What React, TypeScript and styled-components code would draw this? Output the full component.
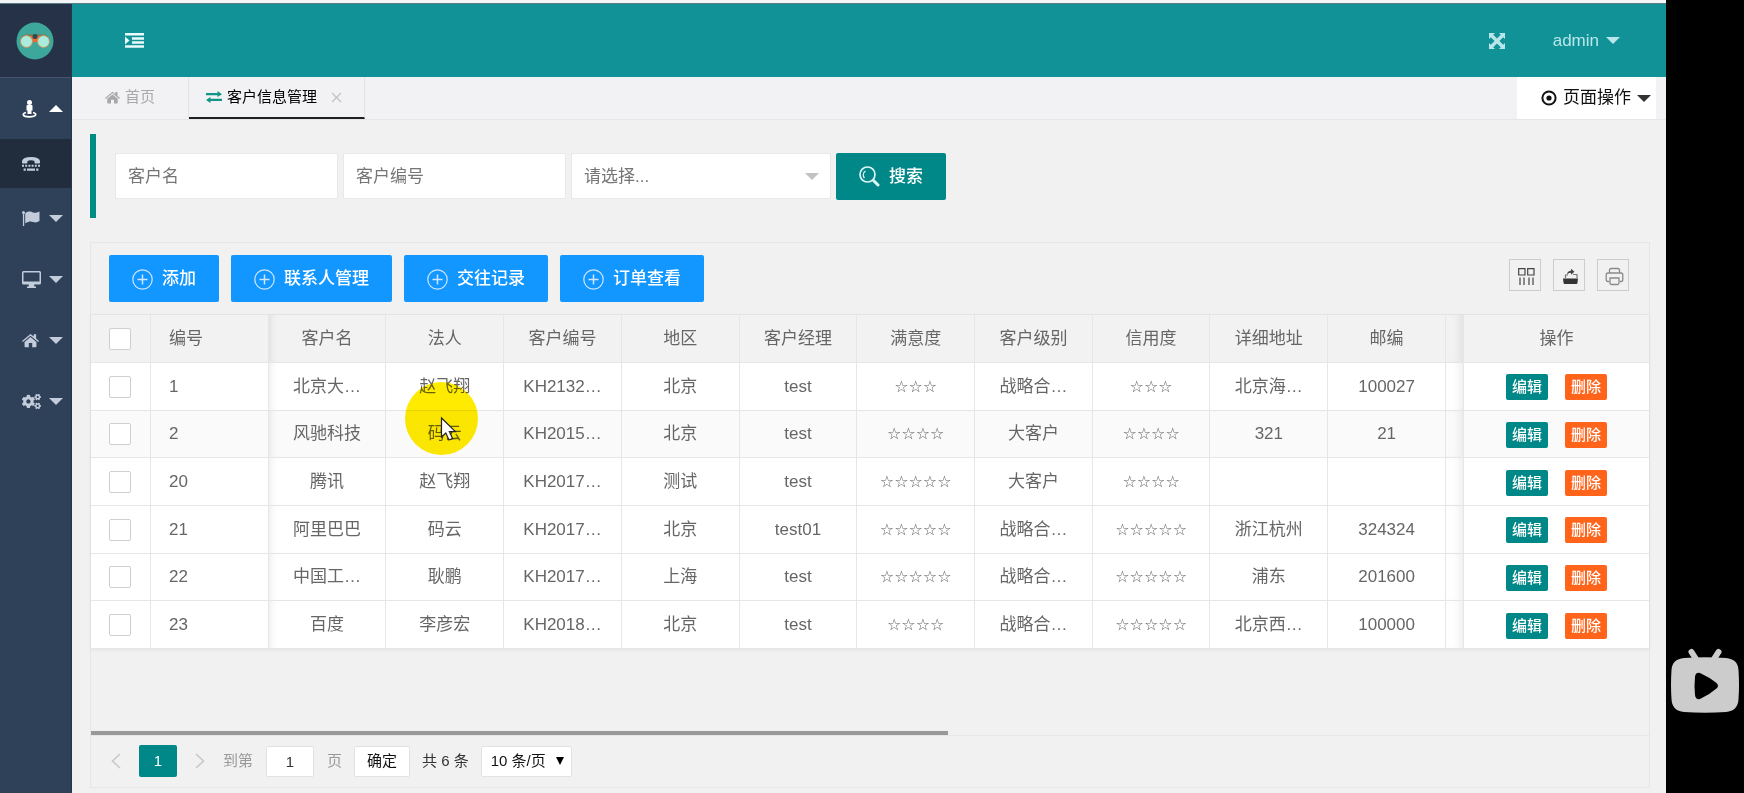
import React from 'react';
import styled, { createGlobalStyle, css } from 'styled-components';
import { FaCogs } from 'react-icons/fa';

const GlobalStyle = createGlobalStyle`
  *, *::before, *::after { box-sizing: border-box; }
  body {
    margin: 0;
    background: #000;
    color: #666;
    font: 17px/24px "Liberation Sans", "Noto Sans CJK SC", sans-serif;
  }
  button, input, select { font: inherit; color: inherit; margin: 0; }
  button { cursor: pointer; }
  a { color: inherit; text-decoration: none; }
  svg { display: block; flex: none; }
`;

const Screen = styled.div`
  display: flex;
  min-height: 100vh;
`;

const Page = styled.div`
  flex: 1;
  min-width: 0;
  display: flex;
  flex-direction: column;
  background: #f1f1f1;
  border-top: 3px solid #f4f5f7;
`;

const Shell = styled.div`
  flex: 1;
  display: flex;
  border-top: 1px solid #5b7f88;
`;

const PlayerRail = styled.aside`
  width: 78px;
  flex: none;
  display: flex;
  flex-direction: column;
  justify-content: flex-end;
  align-items: center;
  padding-bottom: 80px;
`;

const PlayerButton = styled.button`
  border: 0;
  padding: 0;
  background: none;
`;

const Sidebar = styled.nav`
  width: 72px;
  flex: none;
  background: #2f4059;
  border-right: 1px solid #28354a;
`;

const Logo = styled.a`
  display: flex;
  height: 74px;
  padding-right: 2px;
  align-items: center;
  justify-content: center;
  background: #263248;
  border-bottom: 1px solid #46536a;
`;

const NavItem = styled.a<{ $height: number; $tone?: 'open' | 'current' }>`
  display: flex;
  align-items: center;
  height: ${(p) => p.$height}px;
  padding: 0 8px 0 22px;
  justify-content: space-between;
  color: ${(p) => (p.$tone === 'open' ? '#fff' : '#c3ccdb')};
  background: ${(p) => (p.$tone === 'current' ? '#212c3c' : 'transparent')};
`;

const Caret = styled.span<{ $up?: boolean; $color?: string }>`
  flex: none;
  border: 7px solid transparent;
  ${(p) =>
    p.$up
      ? css`
          border-top-width: 0;
          border-bottom-color: currentColor;
        `
      : css`
          border-bottom-width: 0;
          border-top-color: currentColor;
        `}
  ${(p) => p.$color && css`color: ${p.$color};`}
`;

const Main = styled.div`
  flex: 1;
  min-width: 0;
  display: flex;
  flex-direction: column;
`;

const Header = styled.header`
  height: 73px;
  display: flex;
  align-items: center;
  justify-content: space-between;
  padding: 0 46px 0 53px;
  background: #119296;
  color: #b9e6ea;
`;

const HeaderGroup = styled.div`
  display: flex;
  align-items: center;
  gap: 48px;
`;

const HeaderButton = styled.button`
  display: flex;
  align-items: center;
  gap: 7px;
  border: 0;
  padding: 0;
  background: none;
`;

const TabBar = styled.div`
  height: 43px;
  display: flex;
  background: #f2f2f4;
  border-bottom: 1px solid #e6e6e8;
  padding-right: 10px;
`;

const Tab = styled.a<{ $active?: boolean }>`
  display: flex;
  align-items: center;
  gap: 5px;
  height: 42px;
  padding: 0 ${(p) => (p.$active ? 22 : 33)}px 0 ${(p) => (p.$active ? 17 : 33)}px;
  border-right: 1px solid #e4e4e6;
  border-bottom: 2px solid ${(p) => (p.$active ? '#1c2020' : 'transparent')};
  font-size: 15px;
  color: ${(p) => (p.$active ? '#000' : '#a8a8a8')};
`;

const CloseButton = styled.button`
  border: 0;
  padding: 0 0 0 9px;
  background: none;
  color: #c4c4c4;
`;

const PageMenu = styled.button`
  display: flex;
  align-items: center;
  gap: 6px;
  margin-left: auto;
  border: 0;
  padding: 0 5px 0 24px;
  background: #fff;
  color: #111;
`;

const Content = styled.main`
  flex: 1;
  padding: 14px 16px 6px 18px;
`;

const SearchBar = styled.form`
  display: flex;
  align-items: center;
  gap: 5px;
  height: 84px;
  margin-bottom: 24px;
  padding-left: 19px;
  border-left: 6px solid #008c84;
`;

const fieldBox = css`
  height: 46px;
  border: 1px solid #e8e8ea;
  border-radius: 2px;
  background: #fff;
  color: #757575;
`;

const TextField = styled.input`
  ${fieldBox}
  width: 223px;
  padding: 2px 12px 0;
  &::placeholder { color: #757575; opacity: 1; }
`;

const SelectField = styled.div`
  display: flex;
  align-items: center;
  width: 260px;
  ${fieldBox}
  padding-right: 11px;
  select {
    flex: 1;
    height: 44px;
    padding: 2px 0 0 12px;
    border: 0;
    background: none;
    appearance: none;
  }
`;

const ActionButton = styled.button<{ $color: string }>`
  display: flex;
  align-items: center;
  gap: 9px;
  height: 47px;
  padding: 1px 23px 0;
  border: 0;
  border-radius: 2px;
  background: ${(p) => p.$color};
  color: #fff;
  font-weight: 500;
  white-space: nowrap;
`;

const Panel = styled.section`
  display: flex;
  flex-direction: column;
  border: 1px solid #e6e6e6;
`;

const Toolbar = styled.div`
  display: flex;
  align-items: flex-start;
  gap: 12px;
  height: 72px;
  padding: 12px 20px 0 18px;
  border-bottom: 1px solid #e6e6e6;
`;

const ToolIcons = styled.div`
  display: flex;
  gap: 12px;
  margin: 4px 0 0 auto;
`;

const ToolButton = styled.button`
  display: flex;
  align-items: center;
  justify-content: center;
  width: 32px;
  height: 32px;
  border: 1px solid #ccc;
  padding: 2px 0 0 2px;
  background: none;
  color: #333;
`;

const TableArea = styled.div`
  height: 416px;
`;

const Table = styled.table`
  width: 100%;
  height: 334px;
  table-layout: fixed;
  border-collapse: separate;
  border-spacing: 0;
  background: #fff;
  box-shadow: 0 1px 4px rgba(0, 0, 0, 0.06);

  th, td {
    padding: 1px 17px 0;
    border: solid #e6e6e6;
    border-width: 0 1px 1px 0;
    font-weight: 400;
    text-align: center;
    white-space: nowrap;
    overflow: hidden;
  }
  th { height: 48px; background: #f2f2f2; }
  th:nth-child(2), td:nth-child(2) { padding-left: 18px; text-align: left; }
  th:nth-child(3), td:nth-child(3) {
    box-shadow: inset 7px 0 7px -5px rgba(0, 0, 0, 0.08);
  }
  th:nth-child(13), td:nth-child(13) {
    padding: 0;
    box-shadow: inset -8px 0 8px -5px rgba(0, 0, 0, 0.08);
  }
  th:last-child, td:last-child { border-right: 0; padding: 1px 0 0; }
`;

const Row = styled.tr<{ $hover?: boolean }>`
  background: ${(p) => (p.$hover ? '#fafafa' : '#fff')};
`;

const Check = styled.input`
  display: block;
  appearance: none;
  width: 22px;
  height: 22px;
  && { margin: 0 0 0 1px; }
  border: 1px solid #cfcfcf;
  border-radius: 2px;
  background: #fff;
`;

const Stars = styled.span`
  font-family: "DejaVu Sans", sans-serif;
  font-size: 16px;
`;

const RowActions = styled.div`
  display: flex;
  justify-content: center;
  gap: 17px;
  padding-top: 1px;
`;

const SmallButton = styled.button<{ $color: string }>`
  width: 42px;
  height: 26px;
  border: 0;
  border-radius: 2px;
  padding: 0;
  background: ${(p) => p.$color};
  color: #fff;
  font-size: 15px;
  font-weight: 500;
`;

const ScrollTrack = styled.div`
  height: 5px;
  border-bottom: 1px solid #e6e6e6;
`;

const ScrollThumb = styled.div`
  width: 55%;
  height: 4px;
  background: #999;
`;

const Pager = styled.div`
  display: flex;
  align-items: center;
  height: 51px;
  padding: 0 0 1px 20px;
  font-size: 15px;
  color: #333;
`;

const ArrowButton = styled.button`
  border: 0;
  padding: 0;
  background: none;
  color: #c8c8c8;
`;

const CurrentPage = styled.span`
  width: 38px;
  height: 32px;
  margin: 0 18px;
  border-radius: 2px;
  background: #008787;
  color: #fff;
  line-height: 32px;
  text-align: center;
`;

const JumpLabel = styled.label`
  display: flex;
  align-items: center;
  gap: 13px;
  margin: 0 12px 0 18px;
  color: #999;
`;

const JumpInput = styled.input`
  width: 48px;
  height: 31px;
  border: 1px solid #e2e2e2;
  border-radius: 2px;
  padding: 0;
  background: #fff;
  color: #333;
  text-align: center;
`;

const ConfirmButton = styled.button`
  width: 56px;
  height: 31px;
  margin-right: 12px;
  border: 1px solid #e2e2e2;
  border-radius: 2px;
  padding: 0;
  background: #fff;
  color: #111;
`;

const PageSize = styled.div`
  display: flex;
  align-items: center;
  width: 91px;
  height: 31px;
  margin-left: 12px;
  border: 1px solid #e2e2e2;
  border-radius: 2px;
  padding-right: 7px;
  background: #fff;
  color: #111;
  select {
    flex: 1;
    min-width: 0;
    border: 0;
    padding: 0 0 0 9px;
    background: none;
    appearance: none;
  }
  span {
    border: 4px solid transparent;
    border-top: 8px solid #000;
    border-bottom: 0;
  }
`;

const Pointer = styled.div`
  position: absolute;
  left: 405px;
  top: 382px;
  pointer-events: none;
  mix-blend-mode: multiply;
`;

const PointerArrow = styled(Pointer)`
  mix-blend-mode: normal;
`;

const LogoMark = () => (
  <svg width="38" height="38" viewBox="0 0 38 38">
    <circle cx="19" cy="19" r="18.500" fill="#3ea79b" />
    <path d="M6 16q2-3 6-3h14q4 0 6 3" fill="none" stroke="#7d7a55" strokeWidth="1.500" />
    <path d="M13 14h12v3l-3 1-1 2h-4l-1-2-3-1z" fill="#ef6a34" />
    <circle cx="19" cy="14.500" r="2.500" fill="#2c4a50" />
    <circle cx="10.500" cy="19.500" r="6" fill="#a9ecdc" stroke="#c98f5c" strokeWidth="1" />
    <circle cx="27.500" cy="19.500" r="6" fill="#a9ecdc" stroke="#c98f5c" strokeWidth="1" />
  </svg>
);

const IndentIcon = () => (
  <svg width="19" height="15" viewBox="0 0 19 15" fill="#e9fbfc">
    <path d="M0 0h19v2.500H0zM7 4.200h12v2.500H7zM7 8.300h12v2.500H7zM0 12.300h19v2.500H0zM0 3.500l4.500 4L0 11.500z" />
  </svg>
);

const ExpandIcon = () => (
  <svg width="16" height="16" viewBox="0 0 16 16" fill="currentColor">
    <path d="M0 0h6L4.200 1.800 8 5.600l3.800-3.800L10 0h6v6l-1.800-1.800L10.400 8l3.800 3.800L16 10v6h-6l1.800-1.800L8 10.400l-3.800 3.800L6 16H0v-6l1.800 1.800L5.600 8 1.800 4.200 0 6z" />
  </svg>
);

const StreetViewIcon = () => (
  <svg width="15" height="18" viewBox="0 0 15 18" fill="currentColor">
    <circle cx="7.500" cy="2.500" r="2.500" />
    <path d="M5.500 5h4q1 0 1 1v4.500H9.500V14h-4v-3.500h-1V6q0-1 1-1z" />
    <path d="M4 12.500Q1.300 13.200 1.300 14.500c0 1.500 3 2.300 6.200 2.300s6.200-.8 6.200-2.300q0-1.300-2.700-2" fill="none" stroke="currentColor" strokeWidth="1.800" />
  </svg>
);

const TtyIcon = () => (
  <svg width="18" height="14" viewBox="0 0 18 14" fill="currentColor">
    <path d="M0 5.500V4Q1 0 9 0t9 4v1.500q0 1-1 1h-3.500q-1 0-1-1V4Q11 3.200 9 3.200T5.500 4v1.500q0 1-1 1H1q-1 0-1-1z" />
    <path d="M0 7.800h2v2H0zM3.200 7.800h2v2h-2zM6.400 7.800h2v2h-2zM9.600 7.800h2v2h-2zM12.800 7.800h2v2h-2zM16 7.800h2v2h-2zM1.600 11.500h2.200v2.200H1.600zM5 11.500h8v2.200H5zM14.200 11.500h2.200v2.200h-2.200z" />
  </svg>
);

const FlagIcon = () => (
  <svg width="18" height="15" viewBox="0 0 18 15" fill="currentColor">
    <circle cx="1.500" cy="1.500" r="1.500" />
    <path d="M.9 1h1.300v14H.9zM3.200 2.200C7-.2 9 .5 11 1.400c2.200 1 4-.2 6.500-1v9.700c-2 1-4 2-6.300 1-2.200-1-4.200-1-8 1.200z" />
  </svg>
);

const DesktopIcon = () => (
  <svg width="19" height="17" viewBox="0 0 19 17" fill="currentColor">
    <path fillRule="evenodd" d="M1.500 0h16Q19 0 19 1.500v10.500q0 1.500-1.500 1.500H12l.5 2H14V17H5v-1.500h1.500l.5-2H1.500Q0 13.500 0 12V1.500Q0 0 1.500 0zM1.500 1.500v9h16v-9z" />
  </svg>
);

const HomeIcon = ({ size }: { size: number }) => (
  <svg width={size} height={size} viewBox="0 0 16 16" fill="currentColor">
    <path d="M8 1.800l3 2.500V2h2.300v4.200L16 8.500l-.8 1L8 3.500.8 9.500l-.8-1z" />
    <path d="M8 4.700l5.600 4.700v4.100q0 .8-.8.800H9.600v-4H6.400v4H3.200q-.8 0-.8-.8V9.400z" />
  </svg>
);

const ExchangeIcon = () => (
  <svg width="16" height="12" viewBox="0 0 16 12" fill="#119587">
    <path d="M0 2H11.500V0L16 3.200 11.500 6V4.300H0zM16 7.700H4.500V6L0 9l4.500 3V10H16z" />
  </svg>
);

const DotCircleIcon = () => (
  <svg width="16" height="16" viewBox="0 0 16 16">
    <circle cx="8" cy="8" r="6.600" fill="none" stroke="currentColor" strokeWidth="2" />
    <circle cx="8" cy="8" r="2.600" fill="currentColor" />
  </svg>
);

const SearchIcon = () => (
  <svg width="21" height="21" viewBox="0 0 21 21" fill="none" stroke="#dff6f6">
    <circle cx="8.500" cy="8.500" r="7.500" strokeWidth="1.700" />
    <path d="M14.500 14.500l4.500 4.500" strokeWidth="3" strokeLinecap="round" />
    <path d="M5.500 12a4.500 4.500 0 0 1 1-7" strokeWidth="1.200" />
  </svg>
);

const PlusCircleIcon = () => (
  <svg width="21" height="21" viewBox="0 0 21 21" fill="none" stroke="#cfe7ff">
    <circle cx="10.500" cy="10.500" r="9.700" strokeWidth="1.200" />
    <path d="M10.500 5.500v10M5.500 10.500h10" strokeWidth="1.500" />
  </svg>
);

const ColumnsIcon = () => (
  <svg width="17" height="17" viewBox="0 0 17 17" fill="none" stroke="#444">
    <path d="M.7.7h6.300v6.300H.7zM9.700.7H16v6.300H9.700zM2 9.500V17M6 9.500V17M11 9.500V17M15 9.500V17" strokeWidth="1.200" />
  </svg>
);

const ExportIcon = () => (
  <svg width="17" height="17" viewBox="0 0 17 17">
    <path d="M1 10.500h15l-.6 4.700q-.2.800-1 .8H2.600q-.8 0-1-.8z" fill="#333" />
    <path d="M3.500 10V7H6M11 6.500h4v3.500" fill="none" stroke="#777" strokeWidth="1.200" />
    <path d="M5 6.500Q5.500 2.800 9 2.800V.8l3.500 3L9 6.800V4.800Q6.500 4.800 5 6.500z" fill="#444" />
  </svg>
);

const PrintIcon = () => (
  <svg width="19" height="19" viewBox="0 0 19 19" fill="none" stroke="#8a8a8a" strokeWidth="1.300">
    <path d="M4.500 6V3q0-1.500 1.500-1.500h7Q14.500 1.500 14.500 3v3M4 14.500H3q-1.800 0-1.800-2V8Q1.200 6 3 6h13q1.800 0 1.800 2v4.500q0 2-1.800 2h-1" />
    <path d="M5 11h9v5q0 1.500-1.500 1.500h-6Q5 17.500 5 16z" />
  </svg>
);

const Chevron = ({ left }: { left?: boolean }) => (
  <svg width="10" height="16" viewBox="0 0 10 16" fill="none" stroke="currentColor" strokeWidth="1.600">
    <path d={left ? 'M9 1L1.500 8 9 15' : 'M1 1l7.500 7L1 15'} />
  </svg>
);

const TvIcon = () => (
  <svg width="68" height="66" viewBox="0 0 68 66">
    <path d="M20.500 4l4.500 7M47.500 4L43 11" stroke="#ccc" strokeWidth="6" strokeLinecap="round" />
    <path d="M13 10q21-1.500 42 0 12 1 12.500 12 1 15 0 29Q67 63 55 64q-21 1.500-42 0Q1 63 .5 51q-1-14 0-29Q1 11 13 10z" fill="#ccc" />
    <path d="M24 29q.5-5 5-4 9 4 16.500 10 3 3 0 5.500Q38 47 29 51q-4.500 1-5-4-1-9 0-18z" fill="#000" />
  </svg>
);

const columns = ['编号', '客户名', '法人', '客户编号', '地区', '客户经理', '满意度', '客户级别', '信用度', '详细地址', '邮编'];

const customers = [
  ['1', '北京大…', '赵飞翔', 'KH2132…', '北京', 'test', '☆☆☆', '战略合…', '☆☆☆', '北京海…', '100027'],
  ['2', '风驰科技', '码云', 'KH2015…', '北京', 'test', '☆☆☆☆', '大客户', '☆☆☆☆', '321', '21'],
  ['20', '腾讯', '赵飞翔', 'KH2017…', '测试', 'test', '☆☆☆☆☆', '大客户', '☆☆☆☆', '', ''],
  ['21', '阿里巴巴', '码云', 'KH2017…', '北京', 'test01', '☆☆☆☆☆', '战略合…', '☆☆☆☆☆', '浙江杭州', '324324'],
  ['22', '中国工…', '耿鹏', 'KH2017…', '上海', 'test', '☆☆☆☆☆', '战略合…', '☆☆☆☆☆', '浦东', '201600'],
  ['23', '百度', '李彦宏', 'KH2018…', '北京', 'test', '☆☆☆☆', '战略合…', '☆☆☆☆☆', '北京西…', '100000'],
];

const tools = ['添加', '联系人管理', '交往记录', '订单查看'];

export default function App() {
  return (
    <Screen>
      <GlobalStyle />
      <Page>
        <Shell>
          <Sidebar>
            <Logo href="#" aria-label="logo"><LogoMark /></Logo>
            <NavItem href="#" $height={61} $tone="open"><StreetViewIcon /><Caret $up /></NavItem>
            <NavItem href="#" $height={49} $tone="current"><TtyIcon /></NavItem>
            <NavItem href="#" $height={61}><FlagIcon /><Caret /></NavItem>
            <NavItem href="#" $height={61}><DesktopIcon /><Caret /></NavItem>
            <NavItem href="#" $height={61}><HomeIcon size={17} /><Caret /></NavItem>
            <NavItem href="#" $height={61}><FaCogs size={19} /><Caret /></NavItem>
          </Sidebar>
          <Main>
            <Header>
              <HeaderButton aria-label="menu"><IndentIcon /></HeaderButton>
              <HeaderGroup>
                <HeaderButton aria-label="fullscreen"><ExpandIcon /></HeaderButton>
                <HeaderButton>admin<Caret /></HeaderButton>
              </HeaderGroup>
            </Header>
            <TabBar>
              <Tab href="#"><HomeIcon size={15} />首页</Tab>
              <Tab href="#" $active>
                <ExchangeIcon />客户信息管理
                <CloseButton aria-label="close">
                  <svg width="11" height="11" viewBox="0 0 11 11" stroke="currentColor" strokeWidth="1.400">
                    <path d="M1 1l9 9M10 1l-9 9" />
                  </svg>
                </CloseButton>
              </Tab>
              <PageMenu><DotCircleIcon />页面操作<Caret $color="#333" /></PageMenu>
            </TabBar>
            <Content>
              <SearchBar>
                <TextField placeholder="客户名" aria-label="客户名" />
                <TextField placeholder="客户编号" aria-label="客户编号" />
                <SelectField>
                  <select aria-label="客户级别"><option>请选择...</option></select>
                  <Caret $color="#c2c2c2" />
                </SelectField>
                <ActionButton type="button" $color="#008787"><SearchIcon />搜索</ActionButton>
              </SearchBar>
              <Panel>
                <Toolbar>
                  {tools.map((t) => (
                    <ActionButton key={t} $color="#1296ff"><PlusCircleIcon />{t}</ActionButton>
                  ))}
                  <ToolIcons>
                    <ToolButton aria-label="columns"><ColumnsIcon /></ToolButton>
                    <ToolButton aria-label="export"><ExportIcon /></ToolButton>
                    <ToolButton aria-label="print"><PrintIcon /></ToolButton>
                  </ToolIcons>
                </Toolbar>
                <TableArea>
                  <Table>
                    <colgroup>
                      <col width="60" />
                      {columns.map((c) => <col key={c} />)}
                      <col width="18" />
                      <col width="185" />
                    </colgroup>
                    <thead>
                      <tr>
                        <th><Check type="checkbox" aria-label="all" /></th>
                        {columns.map((c) => <th key={c}>{c}</th>)}
                        <th />
                        <th>操作</th>
                      </tr>
                    </thead>
                    <tbody>
                      {customers.map((row) => (
                        <Row key={row[0]} $hover={row[0] === '2'}>
                          <td><Check type="checkbox" aria-label={row[0]} /></td>
                          {row.map((v, i) => (
                            <td key={i}>{v.startsWith('☆') ? <Stars>{v}</Stars> : v}</td>
                          ))}
                          <td />
                          <td>
                            <RowActions>
                              <SmallButton $color="#008787">编辑</SmallButton>
                              <SmallButton $color="#ff641a">删除</SmallButton>
                            </RowActions>
                          </td>
                        </Row>
                      ))}
                    </tbody>
                  </Table>
                </TableArea>
                <ScrollTrack><ScrollThumb /></ScrollTrack>
                <Pager>
                  <ArrowButton aria-label="previous"><Chevron left /></ArrowButton>
                  <CurrentPage>1</CurrentPage>
                  <ArrowButton aria-label="next"><Chevron /></ArrowButton>
                  <JumpLabel>到第<JumpInput defaultValue="1" />页</JumpLabel>
                  <ConfirmButton>确定</ConfirmButton>
                  共 6 条
                  <PageSize>
                    <select aria-label="页"><option>10 条/页</option></select>
                    <span />
                  </PageSize>
                </Pager>
              </Panel>
            </Content>
          </Main>
        </Shell>
      </Page>
      <PlayerRail>
        <PlayerButton aria-label="play"><TvIcon /></PlayerButton>
      </PlayerRail>
      <Pointer>
        <svg width="73" height="73" viewBox="0 0 73 73"><circle cx="36.500" cy="36.500" r="36.500" fill="#ffeb00" /></svg>
      </Pointer>
      <PointerArrow>
        <svg width="73" height="73" viewBox="0 0 73 73">
          <path d="M36.500 36v19l4.300-4 3.200 7 3.600-1.600-3.200-6.800h6z" fill="#fff" stroke="#222" strokeWidth="1.200" />
        </svg>
      </PointerArrow>
    </Screen>
  );
}
